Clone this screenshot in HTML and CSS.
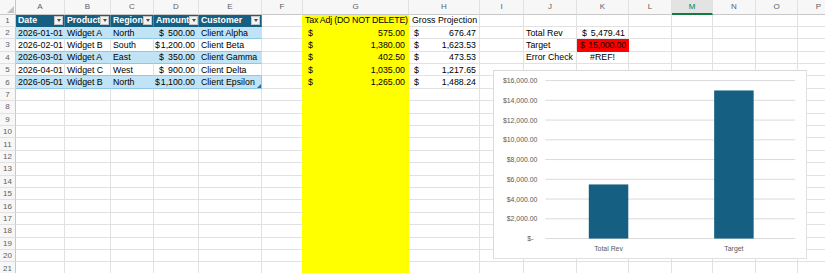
FILE: index.html
```html
<!DOCTYPE html>
<html lang="en">
  <head>
    <meta charset="UTF-8" />
    <meta name="viewport" content="width=device-width, initial-scale=1.0" />
    <title>Sales sheet</title>
    <link rel="stylesheet" href="styles.css">
  </head>
  <body>
    <div class="sheet">
      <!-- column headers -->
      <div class="corner"><span class="tri"></span></div>
      <div class="ch">A</div><div class="ch">B</div><div class="ch">C</div><div class="ch">D</div>
      <div class="ch">E</div><div class="ch">F</div><div class="ch">G</div><div class="ch">H</div>
      <div class="ch">I</div><div class="ch">J</div><div class="ch">K</div><div class="ch">L</div>
      <div class="ch sel">M</div><div class="ch">N</div><div class="ch">O</div><div class="ch">P</div>

      <!-- row 1 -->
      <div class="rh">1</div>
      <div class="th">Date<span class="fb"></span></div>
      <div class="th">Product<span class="fb"></span></div>
      <div class="th">Region<span class="fb"></span></div>
      <div class="th">Amount<span class="fb"></span></div>
      <div class="th">Customer<span class="fb"></span></div>
      <div></div>
      <div class="y narrow">Tax Adj (DO NOT DELETE)</div>
      <div class="pad">Gross Projection</div>
      <div></div><div></div><div></div><div></div><div></div><div></div><div></div><div></div>

      <!-- row 2 -->
      <div class="rh">2</div>
      <div class="band">2026-01-01</div>
      <div class="band">Widget A</div>
      <div class="band">North</div>
      <div class="band acc"><span>$</span><span>500.00</span></div>
      <div class="band">Client Alpha</div>
      <div></div>
      <div class="y acc"><span>$</span><span>575.00</span></div>
      <div class="acc"><span>$</span><span>676.47</span></div>
      <div></div>
      <div>Total Rev</div>
      <div class="acc"><span>$</span><span>5,479.41</span></div>
      <div></div><div></div><div></div><div></div><div></div>

      <!-- row 3 -->
      <div class="rh">3</div>
      <div class="tb">2026-02-01</div>
      <div class="tb">Widget B</div>
      <div class="tb">South</div>
      <div class="tb acc tight"><span>$</span><span>1,200.00</span></div>
      <div class="tb">Client Beta</div>
      <div></div>
      <div class="y acc"><span>$</span><span>1,380.00</span></div>
      <div class="acc"><span>$</span><span>1,623.53</span></div>
      <div></div>
      <div>Target</div>
      <div class="red acc"><span>$</span><span>15,000.00</span></div>
      <div></div><div></div><div></div><div></div><div></div>

      <!-- row 4 -->
      <div class="rh">4</div>
      <div class="band">2026-03-01</div>
      <div class="band">Widget A</div>
      <div class="band">East</div>
      <div class="band acc"><span>$</span><span>350.00</span></div>
      <div class="band">Client Gamma</div>
      <div></div>
      <div class="y acc"><span>$</span><span>402.50</span></div>
      <div class="acc"><span>$</span><span>473.53</span></div>
      <div></div>
      <div>Error Check</div>
      <div class="mid">#REF!</div>
      <div></div><div></div><div></div><div></div><div></div>

      <!-- row 5 -->
      <div class="rh">5</div>
      <div class="tb">2026-04-01</div>
      <div class="tb">Widget C</div>
      <div class="tb">West</div>
      <div class="tb acc"><span>$</span><span>900.00</span></div>
      <div class="tb">Client Delta</div>
      <div></div>
      <div class="y acc"><span>$</span><span>1,035.00</span></div>
      <div class="acc"><span>$</span><span>1,217.65</span></div>
      <div></div><div></div><div></div><div></div><div></div><div></div><div></div><div></div>

      <!-- row 6 -->
      <div class="rh">6</div>
      <div class="band">2026-05-01</div>
      <div class="band">Widget B</div>
      <div class="band">North</div>
      <div class="band acc tight"><span>$</span><span>1,100.00</span></div>
      <div class="band grip">Client Epsilon</div>
      <div></div>
      <div class="y acc"><span>$</span><span>1,265.00</span></div>
      <div class="acc"><span>$</span><span>1,488.24</span></div>
      <div></div><div></div><div></div><div></div><div></div><div></div><div></div><div></div>

      <!-- empty rows -->
      <div class="rh">7</div><div></div><div></div><div></div><div></div><div></div><div></div><div class="y"></div><div></div><div></div><div></div><div></div><div></div><div></div><div></div><div></div><div></div>
      <div class="rh">8</div><div></div><div></div><div></div><div></div><div></div><div></div><div class="y"></div><div></div><div></div><div></div><div></div><div></div><div></div><div></div><div></div><div></div>
      <div class="rh">9</div><div></div><div></div><div></div><div></div><div></div><div></div><div class="y"></div><div></div><div></div><div></div><div></div><div></div><div></div><div></div><div></div><div></div>
      <div class="rh">10</div><div></div><div></div><div></div><div></div><div></div><div></div><div class="y"></div><div></div><div></div><div></div><div></div><div></div><div></div><div></div><div></div><div></div>
      <div class="rh">11</div><div></div><div></div><div></div><div></div><div></div><div></div><div class="y"></div><div></div><div></div><div></div><div></div><div></div><div></div><div></div><div></div><div></div>
      <div class="rh">12</div><div></div><div></div><div></div><div></div><div></div><div></div><div class="y"></div><div></div><div></div><div></div><div></div><div></div><div></div><div></div><div></div><div></div>
      <div class="rh">13</div><div></div><div></div><div></div><div></div><div></div><div></div><div class="y"></div><div></div><div></div><div></div><div></div><div></div><div></div><div></div><div></div><div></div>
      <div class="rh">14</div><div></div><div></div><div></div><div></div><div></div><div></div><div class="y"></div><div></div><div></div><div></div><div></div><div></div><div></div><div></div><div></div><div></div>
      <div class="rh">15</div><div></div><div></div><div></div><div></div><div></div><div></div><div class="y"></div><div></div><div></div><div></div><div></div><div></div><div></div><div></div><div></div><div></div>
      <div class="rh">16</div><div></div><div></div><div></div><div></div><div></div><div></div><div class="y"></div><div></div><div></div><div></div><div></div><div></div><div></div><div></div><div></div><div></div>
      <div class="rh">17</div><div></div><div></div><div></div><div></div><div></div><div></div><div class="y"></div><div></div><div></div><div></div><div></div><div></div><div></div><div></div><div></div><div></div>
      <div class="rh">18</div><div></div><div></div><div></div><div></div><div></div><div></div><div class="y"></div><div></div><div></div><div></div><div></div><div></div><div></div><div></div><div></div><div></div>
      <div class="rh">19</div><div></div><div></div><div></div><div></div><div></div><div></div><div class="y"></div><div></div><div></div><div></div><div></div><div></div><div></div><div></div><div></div><div></div>
      <div class="rh">20</div><div></div><div></div><div></div><div></div><div></div><div></div><div class="y"></div><div></div><div></div><div></div><div></div><div></div><div></div><div></div><div></div><div></div>
      <div class="rh">21</div><div></div><div></div><div></div><div></div><div></div><div></div><div class="y"></div><div></div><div></div><div></div><div></div><div></div><div></div><div></div><div></div><div></div>

      <!-- chart floats over the grid -->
      <div class="chart">
        <svg width="312" height="187" viewBox="0 0 312 187">
          <g class="grid">
            <line x1="50" y1="8.5" x2="303" y2="8.5" />
            <line x1="50" y1="28.5" x2="303" y2="28.5" />
            <line x1="50" y1="48.5" x2="303" y2="48.5" />
            <line x1="50" y1="68.5" x2="303" y2="68.5" />
            <line x1="50" y1="88.5" x2="303" y2="88.5" />
            <line x1="50" y1="108.5" x2="303" y2="108.5" />
            <line x1="50" y1="128.5" x2="303" y2="128.5" />
            <line x1="50" y1="148.5" x2="303" y2="148.5" />
            <line x1="50" y1="168.5" x2="303" y2="168.5" />
          </g>
          <g class="axis">
            <text x="42" y="11">$16,000.00</text>
            <text x="42" y="31">$14,000.00</text>
            <text x="42" y="51">$12,000.00</text>
            <text x="42" y="71">$10,000.00</text>
            <text x="42" y="91">$8,000.00</text>
            <text x="42" y="111">$6,000.00</text>
            <text x="42" y="131">$4,000.00</text>
            <text x="42" y="151">$2,000.00</text>
            <text x="38" y="171">$-</text>
          </g>
          <rect class="bar" x="94" y="113.7" width="40" height="54.8" />
          <rect class="bar" x="221" y="18.5" width="40" height="150" />
          <g class="cat">
            <text x="114" y="181">Total Rev</text>
            <text x="241" y="181">Target</text>
          </g>
        </svg>
      </div>
    </div>
  </body>
</html>
```

FILE: styles.css
```css
* {
  margin: 0;
  padding: 0;
  box-sizing: border-box;
}

body {
  font-family: "Liberation Sans", Arial, sans-serif;
  font-size: 8.8px;
  color: #000;
  background: #fff;
  overflow: hidden;
}

/* Grid */
.sheet {
  position: relative;
  display: grid;
  width: 840px;
  grid-template-columns: 16px 49px 46px 43px 45px 63px 41px 106px 71px 44px 53px 52px 43px 41px 43px 42px 42px;
  grid-template-rows: 14.5px;
  grid-auto-rows: 12.4px;
}

.sheet > div {
  display: flex;
  align-items: center;
  padding: 0 2px;
  white-space: nowrap;
  border-right: 1px solid #e1e1e1;
  border-bottom: 1px solid #e1e1e1;
}

/* Headers */
.sheet > .corner {
  background: #f7f7f7;
  border-right-color: #c8c8c8;
  border-bottom-color: #c8c8c8;
  align-items: flex-end;
  justify-content: flex-end;
  padding: 0 1px 1px 0;
}

.corner .tri {
  width: 0;
  height: 0;
  border-left: 7px solid transparent;
  border-bottom: 7px solid #c2c2c2;
}

.sheet > .ch {
  justify-content: center;
  background: #f7f7f7;
  color: #616161;
  font-size: 8px;
  border-bottom-color: #c8c8c8;
}

.sheet > .ch.sel {
  background: #e3e3e3;
  color: #107c41;
  border-bottom: 2px solid #107c41;
}

.sheet > .rh {
  justify-content: center;
  background: #f7f7f7;
  color: #616161;
  font-size: 8px;
  border-right-color: #c8c8c8;
}

/* Table */
.sheet > .th {
  background: #156082;
  color: #fff;
  font-weight: bold;
  overflow: hidden;
  padding: 0 1px 0 2px;
  border-right-color: #4d86a2;
  border-bottom-color: #156082;
}

.fb {
  flex: none;
  width: 9px;
  height: 9px;
  margin-left: auto;
  background: #f3f3f3;
  border: 1px solid #c6c6c6;
  display: flex;
  align-items: center;
  justify-content: center;
}

.fb::after {
  content: "";
  border-left: 2.5px solid transparent;
  border-right: 2.5px solid transparent;
  border-top: 3px solid #505050;
}

.sheet > .band {
  background: #c0e4f5;
  border-right-color: #c0e4f5;
  border-bottom-color: #8fc8e5;
}

.sheet > .tb {
  border-bottom-color: #8fc8e5;
}

.sheet > .grip {
  position: relative;
  border-right-color: #8fc8e5;
}

.grip::after {
  content: "";
  position: absolute;
  right: 0;
  bottom: 0;
  border-left: 4px solid transparent;
  border-bottom: 4px solid #1f6fa0;
}

.sheet > .narrow {
  letter-spacing: -0.2px;
}

.sheet > .pad {
  padding-left: 3px;
}

/* Accounting numbers */
.sheet > .acc {
  justify-content: space-between;
  padding: 0 3px 0 5px;
}

.sheet > .acc.tight {
  padding-left: 1px;
}

.sheet > .mid {
  justify-content: center;
}

/* Fills */
.sheet > .y {
  background: #ffff00;
  border-right-color: #ffff00;
  border-bottom-color: #ffff00;
}

.sheet > div:has(+ .y) {
  border-right-color: #ffff00;
}

.sheet > .red {
  background: #ff0000;
  color: #1a0000;
  padding: 0 2px 0 3px;
  letter-spacing: -0.15px;
  border-right-color: #ff0000;
  border-bottom-color: #ff0000;
}

/* Chart */
.chart {
  position: absolute;
  left: 493px;
  top: 70px;
  width: 314px;
  height: 189px;
  background: #fff;
  border: 1px solid #d9d9d9;
}

.chart svg {
  display: block;
  font-family: "Liberation Sans", Arial, sans-serif;
}

.chart .grid line {
  stroke: #d9d9d9;
  stroke-width: 1;
}

.chart .axis text {
  font-size: 7px;
  fill: #595959;
  text-anchor: end;
}

.chart .cat text {
  font-size: 7px;
  fill: #595959;
  text-anchor: middle;
}

.chart .bar {
  fill: #156082;
}
```
